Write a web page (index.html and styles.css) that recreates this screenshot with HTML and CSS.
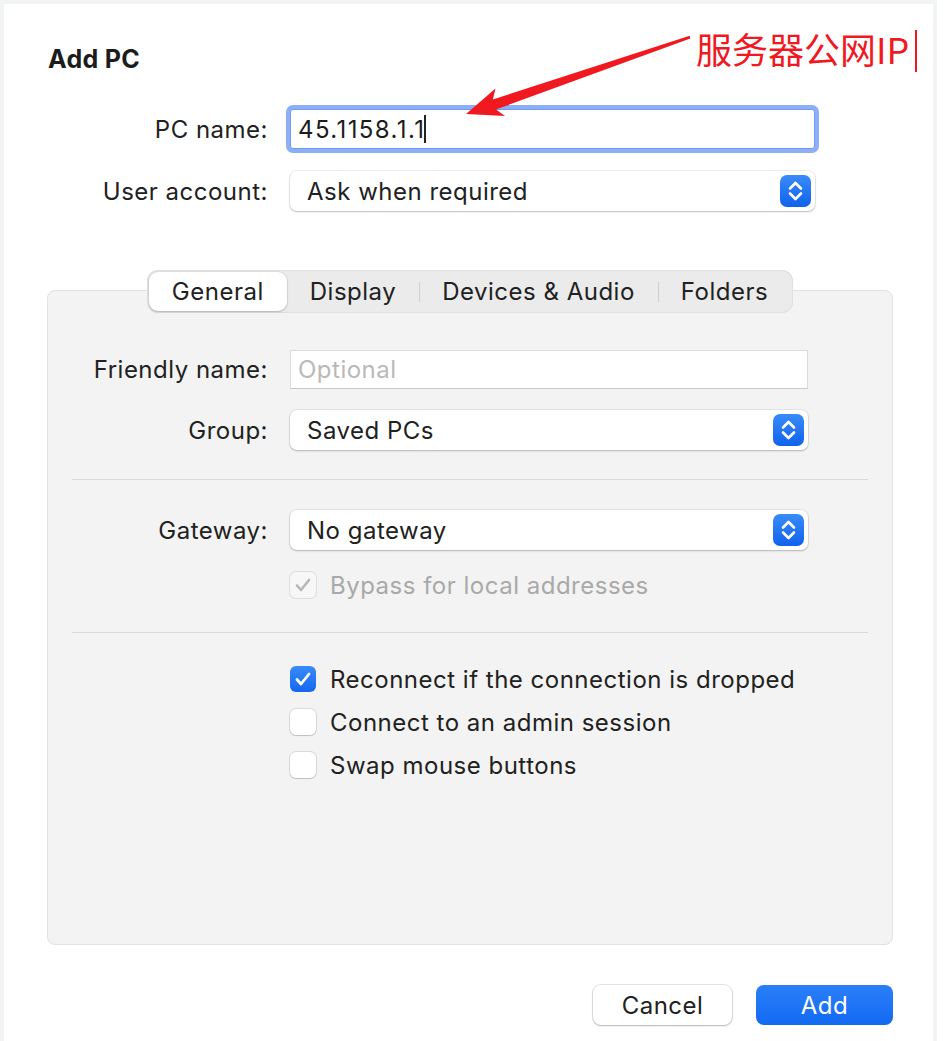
FILE: index.html
```html
<!DOCTYPE html>
<html lang="en">
<head>
  <meta charset="UTF-8">
  <meta name="viewport" content="width=device-width, initial-scale=1.0">
  <title>Add PC</title>
  <link rel="stylesheet" href="styles.css">
</head>
<body>
  <div class="window">
    <h1 class="title">Add PC</h1>

    <div class="row">
      <label class="label">PC name:</label>
      <div class="field focused"><span class="value">45.1158.1.1</span><span class="caret"></span></div>
    </div>
    <div class="row row-gap">
      <label class="label">User account:</label>
      <div class="select">
        <span>Ask when required</span>
        <span class="stepper">
          <svg width="31" height="32" viewBox="0 0 31 32"><path d="M10 13.5 L15.5 8 L21 13.5 M10 18.5 L15.5 24 L21 18.5" fill="none" stroke="#fff" stroke-width="2.6" stroke-linecap="round" stroke-linejoin="round"/></svg>
        </span>
      </div>
    </div>

    <div class="panel">
      <div class="tabs">
        <div class="tab active">General</div>
        <div class="tab">Display</div>
        <div class="tab sep">Devices &amp; Audio</div>
        <div class="tab sep">Folders</div>
      </div>

      <div class="prow friendly">
        <label class="plabel">Friendly name:</label>
        <div class="pfield placeholder">Optional</div>
      </div>
      <div class="prow group">
        <label class="plabel">Group:</label>
        <div class="pselect">
          <span>Saved PCs</span>
          <span class="stepper">
            <svg width="31" height="32" viewBox="0 0 31 32"><path d="M10 13.5 L15.5 8 L21 13.5 M10 18.5 L15.5 24 L21 18.5" fill="none" stroke="#fff" stroke-width="2.6" stroke-linecap="round" stroke-linejoin="round"/></svg>
          </span>
        </div>
      </div>

      <div class="divider first"></div>

      <div class="prow gateway">
        <label class="plabel">Gateway:</label>
        <div class="pselect">
          <span>No gateway</span>
          <span class="stepper">
            <svg width="31" height="32" viewBox="0 0 31 32"><path d="M10 13.5 L15.5 8 L21 13.5 M10 18.5 L15.5 24 L21 18.5" fill="none" stroke="#fff" stroke-width="2.6" stroke-linecap="round" stroke-linejoin="round"/></svg>
          </span>
        </div>
      </div>
      <div class="check-row bypass disabled">
        <span class="box checked">
          <svg width="26" height="26" viewBox="0 0 26 26"><path d="M7 13.5 L11 18 L19 8" fill="none" stroke="#b8b8b8" stroke-width="2.6" stroke-linecap="round" stroke-linejoin="round"/></svg>
        </span>
        <span>Bypass for local addresses</span>
      </div>

      <div class="divider second"></div>

      <div class="checks">
        <div class="check-row">
          <span class="box on">
            <svg width="26" height="26" viewBox="0 0 26 26"><path d="M7 13.5 L11 18 L19 8" fill="none" stroke="#fff" stroke-width="2.8" stroke-linecap="round" stroke-linejoin="round"/></svg>
          </span>
          <span>Reconnect if the connection is dropped</span>
        </div>
        <div class="check-row">
          <span class="box"></span>
          <span>Connect to an admin session</span>
        </div>
        <div class="check-row">
          <span class="box"></span>
          <span>Swap mouse buttons</span>
        </div>
      </div>
    </div>

    <div class="actions">
      <button class="btn cancel">Cancel</button>
      <button class="btn add">Add</button>
    </div>
  </div>

  <!-- annotation drawn over the screenshot -->
  <div class="note">服务器公网IP<span class="note-caret"></span></div>
  <svg class="arrow" width="945" height="1041" viewBox="0 0 945 1041">
    <polygon points="466,114 495.5,88.5 492.8,99.5 689.7,35.8 690.3,38.6 496,109.5 505,116" fill="#f0191f"/>
  </svg>
</body>
</html>
```

FILE: styles.css
```css
* {
  box-sizing: border-box;
}

body {
  margin: 0;
  background: #fff;
  font-family: Inter, "Noto Sans", sans-serif;
  font-size: 24px;
  letter-spacing: 0.5px;
  color: #212121;
  position: relative;
}

.window {
  width: 937px;
  min-height: 1041px;
  border: 4px solid #f2f3f3;
  border-bottom: none;
  background: #fff;
  padding: 40px 40px 0 0;
}

.title {
  margin: 0 0 35px 44px;
  font-size: 25px;
  font-weight: 700;
  line-height: 30px;
  letter-spacing: 0.3px;
  color: #1c1c1c;
}

.row {
  display: flex;
  align-items: center;
  gap: 22px;
}

.row-gap {
  margin-top: 22px;
}

.label {
  width: 264px;
  text-align: right;
}

.field {
  width: 525px;
  height: 40px;
  background: #fff;
  border: 1px solid #6f9af3;
  border-radius: 3px;
  box-shadow: 0 0 0 4px #8caff7;
  display: flex;
  align-items: center;
  padding-left: 7px;
  color: #1c1c1c;
}

.value {
  letter-spacing: 1.4px;
}

.caret {
  display: inline-block;
  width: 2px;
  height: 28px;
  background: #222;
  margin-left: -1px;
}

.select,
.pselect {
  width: 525px;
  height: 40px;
  background: #fff;
  border-radius: 7px;
  box-shadow: 0 0 0 1px rgba(0, 0, 0, 0.06), 0 1px 2px rgba(0, 0, 0, 0.22);
  display: flex;
  align-items: center;
  justify-content: space-between;
  padding: 0 4px 0 17px;
}

.stepper {
  width: 31px;
  height: 32px;
  border-radius: 7px;
  background: linear-gradient(#3a8bf9, #0f62ec);
  display: flex;
}

.panel {
  margin: 79px 0 0 43px;
  height: 655px;
  background: #f3f3f3;
  border: 1px solid #e1e1e1;
  border-radius: 8px;
  padding: 0 24px;
}

.tabs {
  margin: -21px auto 0;
  width: fit-content;
  height: 43px;
  display: flex;
  padding: 2px;
  background: #ebebeb;
  border-radius: 11px;
  box-shadow: inset 0 0 0 1px #e0e0e0;
}

.tab {
  height: 39px;
  line-height: 39px;
  padding: 0 23px;
  position: relative;
}

.tab.active {
  background: #fff;
  border-radius: 9px;
  box-shadow: 0 0 0 1px rgba(0, 0, 0, 0.05), 0 1px 2px rgba(0, 0, 0, 0.2);
}

.tab.sep::before {
  content: "";
  position: absolute;
  left: 0;
  top: 10px;
  width: 1px;
  height: 20px;
  background: #cfcfcf;
}

.prow {
  display: flex;
  align-items: center;
  gap: 22px;
}

.plabel {
  width: 196px;
  text-align: right;
}

.friendly {
  margin-top: 37px;
}

.group {
  margin-top: 21px;
}

.gateway {
  margin-top: 30px;
}

.pfield {
  width: 518px;
  height: 39px;
  background: #fff;
  border: 1px solid #dcdcdc;
  border-bottom-color: #c9c9c9;
  display: flex;
  align-items: center;
  padding-left: 7px;
}

.placeholder {
  color: #b9b9b9;
}

.pselect {
  width: 518px;
}

.divider {
  height: 1px;
  background: #d9d9d9;
}

.divider.first {
  margin-top: 29px;
}

.divider.second {
  margin-top: 34px;
}

.check-row {
  display: flex;
  align-items: center;
  gap: 14px;
  height: 26px;
  padding-left: 218px;
}

.bypass {
  margin-top: 22px;
}

.disabled {
  color: #a9a9a9;
}

.checks {
  margin-top: 33px;
  display: flex;
  flex-direction: column;
  gap: 17px;
}

.box {
  width: 26px;
  height: 26px;
  border-radius: 6px;
  background: #fff;
  box-shadow: 0 0 0 1px rgba(0, 0, 0, 0.1), 0 1px 1px rgba(0, 0, 0, 0.12);
  display: flex;
  flex: none;
}

.box.checked {
  background: #f7f7f7;
  box-shadow: 0 0 0 1px #dedede;
}

.box.on {
  background: linear-gradient(#3a8bf9, #1467ef);
  box-shadow: none;
}

.actions {
  display: flex;
  justify-content: flex-end;
  gap: 24px;
  margin-top: 40px;
}

.btn {
  height: 40px;
  border: none;
  border-radius: 8px;
  font-family: Inter, "Noto Sans", sans-serif;
  font-size: 24px;
  letter-spacing: 0.5px;
  cursor: pointer;
}

.cancel {
  width: 139px;
  background: #fff;
  color: #212121;
  box-shadow: 0 0 0 1px rgba(0, 0, 0, 0.1), 0 1px 2px rgba(0, 0, 0, 0.22);
}

.add {
  width: 137px;
  background: linear-gradient(#2a7ff8, #136af3);
  color: #fff;
}

.note {
  position: absolute;
  left: 696px;
  top: 30px;
  font-family: "Noto Sans CJK SC", sans-serif;
  font-size: 36px;
  line-height: 36px;
  letter-spacing: 0;
  color: #f0191f;
  white-space: nowrap;
}

.note-caret {
  display: inline-block;
  width: 2px;
  height: 42px;
  background: #f0191f;
  margin-left: 6px;
  vertical-align: -8px;
}

.arrow {
  position: absolute;
  left: 0;
  top: 0;
  pointer-events: none;
}
```
